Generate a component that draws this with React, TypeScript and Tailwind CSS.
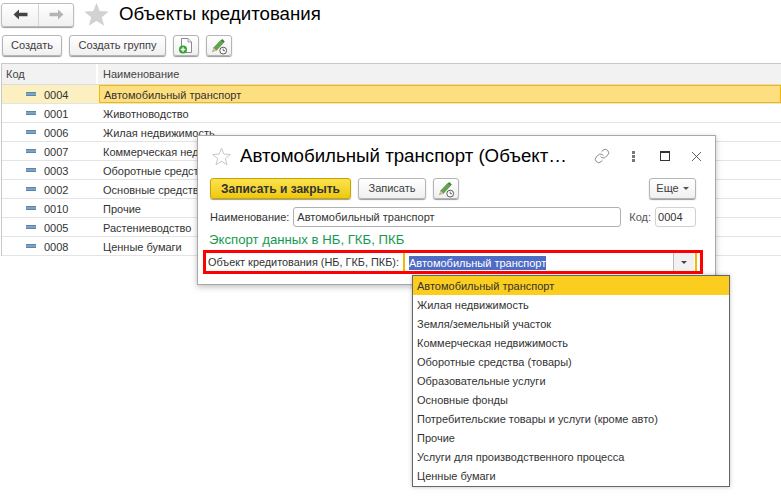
import { Link, X } from "lucide-react";

const rows = [
  ["0004", "Автомобильный транспорт"],
  ["0001", "Животноводство"],
  ["0006", "Жилая недвижимость"],
  ["0007", "Коммерческая недвижимость"],
  ["0003", "Оборотные средства (товары)"],
  ["0002", "Основные средства"],
  ["0010", "Прочие"],
  ["0005", "Растениеводство"],
  ["0008", "Ценные бумаги"],
];

const options = [
  "Автомобильный транспорт",
  "Жилая недвижимость",
  "Земля/земельный участок",
  "Коммерческая недвижимость",
  "Оборотные средства (товары)",
  "Образовательные услуги",
  "Основные фонды",
  "Потребительские товары и услуги (кроме авто)",
  "Прочие",
  "Услуги для производственного процесса",
  "Ценные бумаги",
];

function StarIcon({ size, fill, stroke }: { size: number; fill: string; stroke: string }) {
  return (
    <svg width={size} height={size} viewBox="0 0 24 24" className="shrink-0">
      <path d="M12 1.5 L15 9 L23.2 9.4 L16.8 14.6 L19 22.5 L12 18 L5 22.5 L7.2 14.6 L0.8 9.4 L9 9 Z" fill={fill} stroke={stroke} strokeWidth="1.2" />
    </svg>
  );
}

function NavArrow({ color, flip }: { color: string; flip?: boolean }) {
  return (
    <svg width="15" height="11" viewBox="0 0 15 11" className={flip ? "rotate-180" : ""}>
      <path d="M0.5 5.5 L6 0.5 V3.8 H14.5 V7.2 H6 V10.5 Z" fill={color} />
    </svg>
  );
}

function EditClockIcon() {
  return (
    <svg width="18" height="18" viewBox="0 0 18 18">
      <path d="M3.8 10.8 L11 3.2 L13.6 5.6 L6.4 13.2 Z" fill="#5fa84a" stroke="#3c7a30" strokeWidth="0.7" />
      <path d="M11 3.2 L12.2 2 L14.8 4.4 L13.6 5.6 Z" fill="#3c7a30" />
      <path d="M3.8 10.8 L2.4 14.8 L6.4 13.2 Z" fill="#e8c9a0" stroke="#a58a60" strokeWidth="0.5" />
      <circle cx="13.2" cy="13.6" r="3.4" fill="#fff" stroke="#5a5a5a" strokeWidth="1" />
      <path d="M13.2 11.6 V13.7 H15" fill="none" stroke="#5a5a5a" strokeWidth="0.9" />
    </svg>
  );
}

function NewFileIcon() {
  return (
    <svg width="18" height="18" viewBox="0 0 18 18">
      <path d="M4.5 1.5 H11 L14.5 5 V15.5 H4.5 Z" fill="#fff" stroke="#8a8a8a" strokeWidth="1" />
      <path d="M11 1.5 V5 H14.5" fill="#eee" stroke="#8a8a8a" strokeWidth="0.8" />
      <circle cx="6" cy="12.5" r="4" fill="#2ea52e" />
      <path d="M6 10.2 V14.8 M3.7 12.5 H8.3" stroke="#fff" strokeWidth="1.4" />
    </svg>
  );
}

function Btn({ children, className = "" }: { children: React.ReactNode; className?: string }) {
  return (
    <button className={"h-[21px] flex items-center justify-center rounded-[3px] border border-[#b5b5b5] bg-gradient-to-b from-white to-[#f0f0f0] text-[#3d3d3d] text-[11px] shadow-[0_1px_1px_#999] " + className}>
      {children}
    </button>
  );
}

export default function App() {
  return (
    <div className="relative w-[781px] h-[502px] overflow-hidden bg-white text-[11px] text-[#333] font-['Liberation_Sans',Arial,sans-serif]">
      <div className="flex items-center h-[28px] pl-[1px] pt-[1px]">
        <div className="flex w-[73px] h-[24px] rounded-[3px] border border-[#bdbdbd] bg-gradient-to-b from-white to-[#f0f0f0] shadow-[0_1px_1px_#999]">
          <div className="w-[37px] flex items-center justify-center border-r border-[#d4d4d4]">
            <NavArrow color="#444" />
          </div>
          <div className="flex-1 flex items-center justify-center">
            <NavArrow color="#b4b4b4" flip />
          </div>
        </div>
        <span className="ml-[11px]"><StarIcon size={23} fill="#d2d2d2" stroke="#d2d2d2" /></span>
        <h1 className="ml-[11px] text-[18.7px] leading-none text-black">Объекты кредитования</h1>
      </div>

      <div className="flex items-center gap-[7px] pl-[2px] mt-[7px] h-[21px]">
        <Btn className="w-[60px]">Создать</Btn>
        <Btn className="w-[97px]">Создать группу</Btn>
        <Btn className="w-[26px]"><NewFileIcon /></Btn>
        <Btn className="w-[26px]"><EditClockIcon /></Btn>
      </div>

      <div className="ml-[1px] mt-[7px] border-t border-l border-[#c8c8c8]">
        <div className="flex h-[21px] bg-[#f2f2f2] border-b border-[#dcdcdc] text-[#444]">
          <div className="w-[96px] flex items-center pl-[4px] border-r-2 border-white">Код</div>
          <div className="flex-1 flex items-center pl-[5px]">Наименование</div>
        </div>
        {rows.map(([code, name], i) => (
          <div key={code} className={"flex h-[19px] border-b border-[#e4e4e4] " + (i === 0 ? "bg-[#fcefc0]" : "")}>
            <div className="w-[97px] flex items-center pl-[24px] pt-[2px]">
              <span className="w-[10px] h-[4px] -mt-[2px] bg-[#7ba3c4] border-y border-[#5c87ab]" />
              <span className="ml-[8px]">{code}</span>
            </div>
            <div className={"flex-1 flex items-center pl-[4px] pt-[2px] " + (i === 0 ? "bg-[#fedf80] border border-[#f5b800] pl-[3px] pt-[1px]" : "")}>{name}</div>
          </div>
        ))}
      </div>

      {/* окно элемента */}
      <div className="absolute left-[197px] top-[135px] w-[519px] h-[150px] border border-[#a8a8a8] bg-white shadow-[0_2px_6px_rgba(0,0,0,0.25)] px-[12px]">
        <div className="flex items-center h-[40px]">
          <span className="ml-[2px]"><StarIcon size={19} fill="#fff" stroke="#c4c4c4" /></span>
          <div className="ml-[9px] text-[18.7px] leading-none text-black">Автомобильный транспорт (Объект…</div>
          <Link size={16} strokeWidth={1.3} className="ml-auto text-[#777]" />
          <div className="ml-[22px] flex flex-col gap-[1px]">
            <span className="w-[3px] h-[3px] bg-[#777]" />
            <span className="w-[3px] h-[3px] bg-[#777]" />
            <span className="w-[3px] h-[3px] bg-[#777]" />
          </div>
          <span className="ml-[25px] w-[10px] h-[10px] border border-[#333] border-t-2" />
          <X size={17} strokeWidth={1.2} className="ml-[18px] -mr-[2px] text-[#444]" />
        </div>
        <div className="flex items-center gap-[7px] mt-[2px]">
          <Btn className="w-[141px] !border-[#c9a400] !from-[#fbe34a] !to-[#eec900] font-bold !text-[#333] !text-[12px]">Записать и закрыть</Btn>
          <Btn className="w-[68px]">Записать</Btn>
          <Btn className="w-[26px]"><EditClockIcon /></Btn>
          <Btn className="w-[47px] ml-auto mr-[7px] gap-[4px]">
            Еще
            <span className="border-x-[3px] border-x-transparent border-t-[3px] border-t-[#555]" />
          </Btn>
        </div>
        <div className="flex items-center mt-[8px] h-[20px]">
          <span>Наименование:</span>
          <div className="ml-[4px] w-[328px] h-[20px] flex items-center pl-[3px] border border-[#b0b0b0] rounded-[3px]">Автомобильный транспорт</div>
          <span className="ml-[8px] text-[#555]">Код:</span>
          <div className="ml-[4px] w-[41px] h-[20px] flex items-center pl-[2px] border border-[#d0d0d0] rounded-[3px]">0004</div>
        </div>
        <div className="mt-[5px] -ml-[1px] text-[13.2px] leading-[16px] text-[#149a50]">Экспорт данных в НБ, ГКБ, ПКБ</div>
        <div className="flex items-center mt-[5px] h-[19px] -ml-[2px]">
          <span className="whitespace-nowrap text-[10.9px]">Объект кредитования (НБ, ГКБ, ПКБ):</span>
          <div className="ml-[4px] w-[294px] h-[19px] flex items-center pl-[4px] border-x-2 border-[#f5b800]">
            <span className="bg-[#4f6cc4] text-white leading-[14px]">Автомобильный транспорт</span>
            <span className="ml-auto mr-[1px] w-[21px] h-full flex items-center justify-center bg-[#f2f2f2] border-l border-[#bbb]">
              <span className="border-x-[3px] border-x-transparent border-t-[3px] border-t-[#444]" />
            </span>
          </div>
        </div>
      </div>

      {/* красная рамка */}
      <div className="absolute left-[203px] top-[250px] w-[500px] h-[24px] border-[3px] border-[#ff0000]" />

      {/* выпадающий список */}
      <div className="absolute left-[412px] top-[275px] w-[318px] h-[212px] border border-[#666] bg-white shadow-[0_0_4px_rgba(0,0,0,0.25)]">
        {options.map((o, i) => (
          <div key={o} className={"h-[19px] flex items-center pl-[4px] pt-[1px] " + (i === 0 ? "bg-[#fbcd1f]" : "")}>{o}</div>
        ))}
      </div>
    </div>
  );
}
